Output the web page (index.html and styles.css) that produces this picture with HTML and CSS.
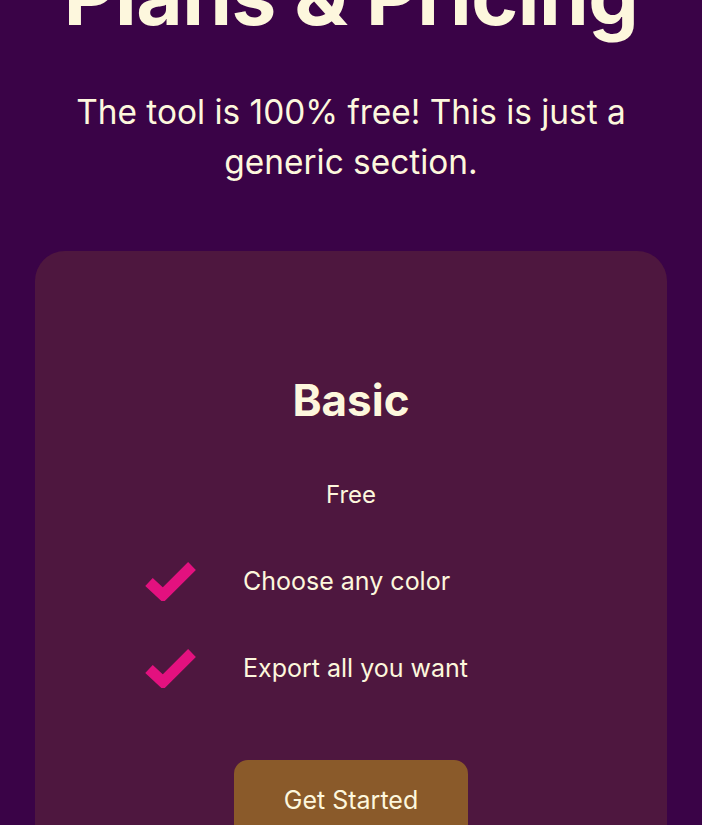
FILE: index.html
```html
<!DOCTYPE html>
<html lang="en">
<head>
<meta charset="utf-8">
<title>Plans &amp; Pricing</title>
<link rel="stylesheet" href="styles.css">
</head>
<body>
<section class="pricing">
  <h1 class="pricing-title">Plans &amp; Pricing</h1>
  <p class="pricing-sub">The tool is 100% free! This is just a generic section.</p>
  <div class="card">
    <h2 class="card-title">Basic</h2>
    <p class="card-price">Free</p>
    <ul class="features">
      <li class="feature">
        <svg class="check" viewBox="0 0 52 40" width="52" height="40"><path d="M4 21 L18 34 L47 5" fill="none" stroke="#e3117f" stroke-width="11"/></svg>
        <span>Choose any color</span>
      </li>
      <li class="feature">
        <svg class="check" viewBox="0 0 52 40" width="52" height="40"><path d="M4 21 L18 34 L47 5" fill="none" stroke="#e3117f" stroke-width="11"/></svg>
        <span>Export all you want</span>
      </li>
    </ul>
    <button class="cta">Get Started</button>
  </div>
</section>
</body>
</html>
```
FILE: styles.css
```css
html, body {
  margin: 0;
  padding: 0;
  background: #3a0347;
  height: 100%;
  overflow: hidden;
}
body {
  font-family: Inter, "Noto Sans", sans-serif;
  color: #fdf7dd;
}
.pricing {
  display: flex;
  flex-direction: column;
  align-items: center;
  padding: 0 35px;
  margin-top: -52px;
}
.pricing-title {
  font-size: 80px;
  font-weight: 700;
  line-height: 96px;
  margin: 0;
  letter-spacing: -0.5px;
  white-space: nowrap;
}
.pricing-sub {
  font-size: 33.4px;
  line-height: 50px;
  text-align: center;
  margin: 43px 0 0;
  max-width: 580px;
}
.card {
  align-self: stretch;
  margin-top: 64px;
  background: #4e173f;
  border-radius: 30px;
  padding: 124px 0 60px;
  display: flex;
  flex-direction: column;
  align-items: center;
}
.card-title {
  margin: 0;
  font-size: 44px;
  font-weight: 700;
  line-height: 50px;
}
.card-price {
  margin: 55px 0 0;
  font-size: 24px;
  line-height: 30px;
}
.features {
  list-style: none;
  align-self: flex-start;
  margin: 51px 0 0 110px;
  padding: 0;
  display: flex;
  flex-direction: column;
  gap: 47px;
}
.feature {
  display: flex;
  align-items: center;
  gap: 46px;
  font-size: 25px;
  line-height: 40px;
}
.check {
  display: block;
}
.cta {
  margin-top: 72px;
  width: 234px;
  height: 80px;
  border: none;
  border-radius: 14px;
  background: #8a5a2a;
  color: #fdf7dd;
  font-family: Inter, "Noto Sans", sans-serif;
  font-size: 25px;
  padding: 0 0 1px;
}
```
